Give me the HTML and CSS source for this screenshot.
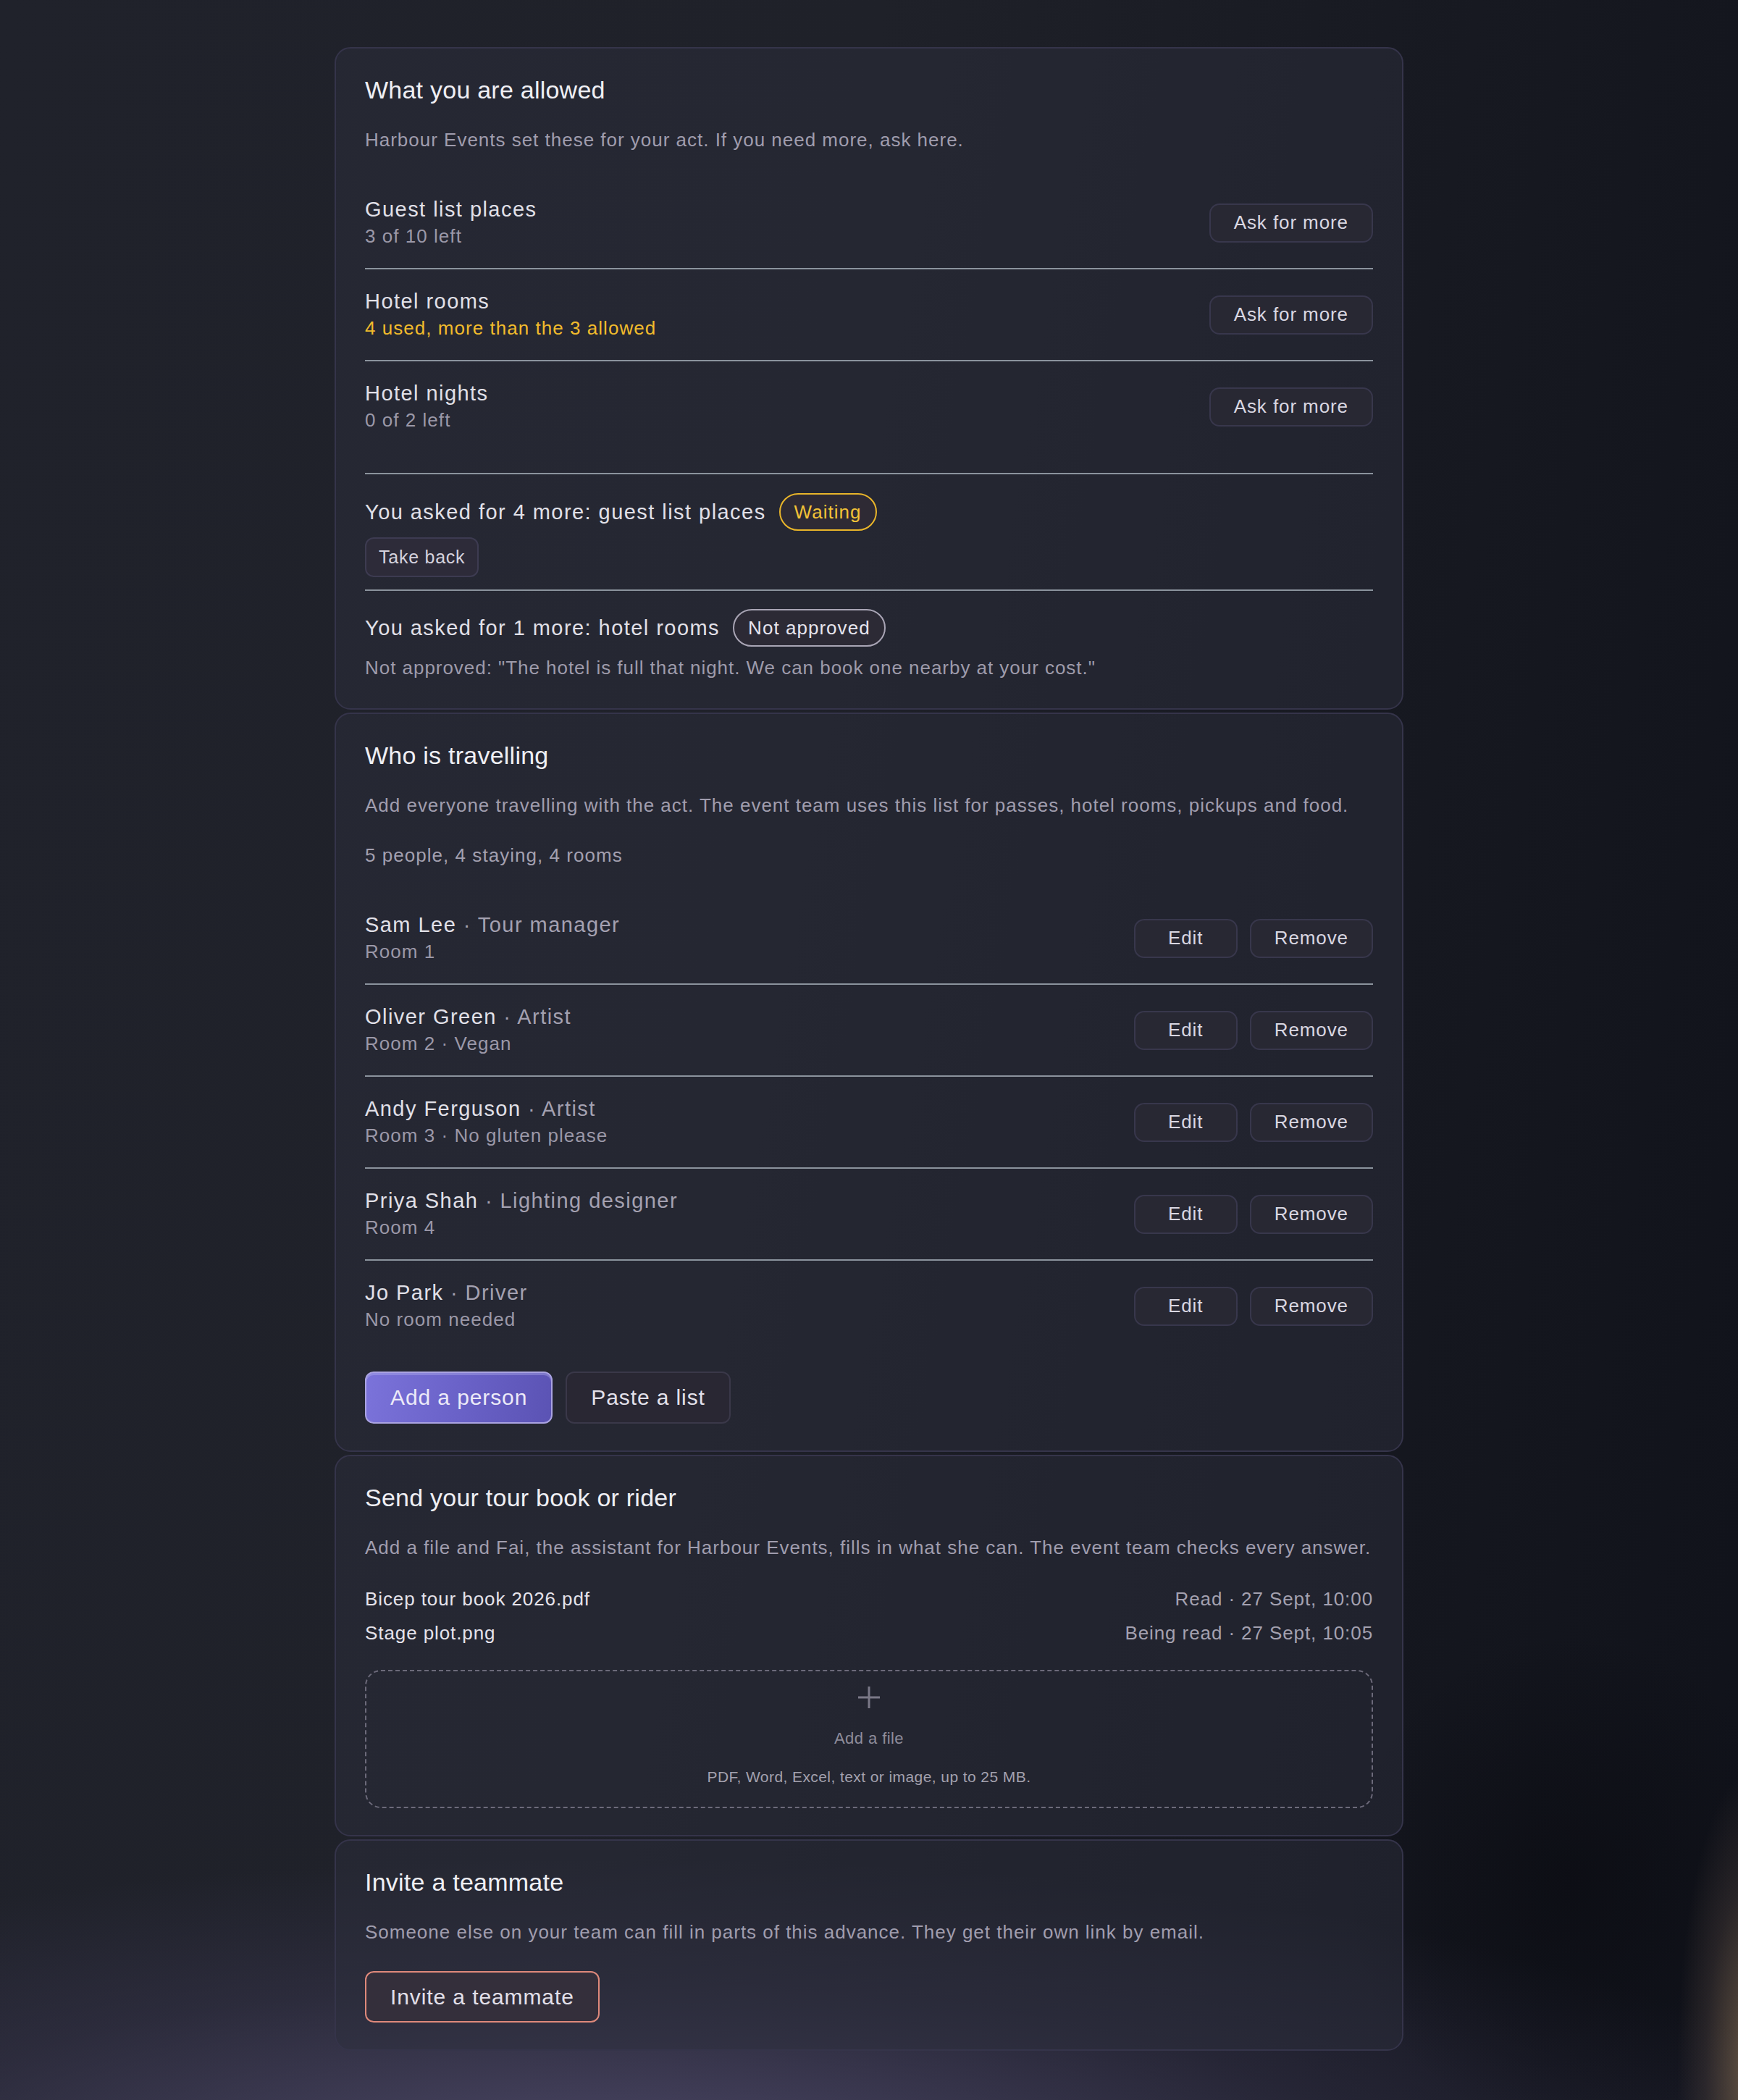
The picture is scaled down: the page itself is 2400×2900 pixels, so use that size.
FILE: index.html
```html
<!DOCTYPE html>
<html lang="en">
<head>
<meta charset="utf-8">
<title>Advance</title>
<link rel="stylesheet" href="styles.css">
</head>
<body>
<main class="page">
  <section class="card">
    <h2 class="card-title">What you are allowed</h2>
    <p class="card-desc">Harbour Events set these for your act. If you need more, ask here.</p>
    <ul class="list">
      <li class="row">
        <div class="row-text">
          <div class="row-name">Guest list places</div>
          <div class="row-sub">3 of 10 left</div>
        </div>
        <button class="btn">Ask for more</button>
      </li>
      <li class="row">
        <div class="row-text">
          <div class="row-name">Hotel rooms</div>
          <div class="row-sub row-sub-warn">4 used, more than the 3 allowed</div>
        </div>
        <button class="btn">Ask for more</button>
      </li>
      <li class="row">
        <div class="row-text">
          <div class="row-name">Hotel nights</div>
          <div class="row-sub">0 of 2 left</div>
        </div>
        <button class="btn">Ask for more</button>
      </li>
    </ul>
    <div class="requests">
      <div class="request">
        <div class="request-head">
          <span class="request-text">You asked for 4 more: guest list places</span>
          <span class="badge badge-waiting">Waiting</span>
        </div>
        <div class="request-actions">
          <button class="btn-small">Take back</button>
        </div>
      </div>
      <div class="request">
        <div class="request-head">
          <span class="request-text">You asked for 1 more: hotel rooms</span>
          <span class="badge badge-declined">Not approved</span>
        </div>
        <p class="request-note">Not approved: "The hotel is full that night. We can book one nearby at your cost."</p>
      </div>
    </div>
  </section>

  <section class="card">
    <h2 class="card-title">Who is travelling</h2>
    <p class="card-desc">Add everyone travelling with the act. The event team uses this list for passes, hotel rooms, pickups and food.</p>
    <p class="summary">5 people, 4 staying, 4 rooms</p>
    <ul class="list people">
      <li class="row">
        <div class="row-text">
          <div class="row-name">Sam Lee <span class="row-role">· Tour manager</span></div>
          <div class="row-sub">Room 1</div>
        </div>
        <div class="row-actions"><button class="btn btn-edit">Edit</button><button class="btn">Remove</button></div>
      </li>
      <li class="row">
        <div class="row-text">
          <div class="row-name">Oliver Green <span class="row-role">· Artist</span></div>
          <div class="row-sub">Room 2 · Vegan</div>
        </div>
        <div class="row-actions"><button class="btn btn-edit">Edit</button><button class="btn">Remove</button></div>
      </li>
      <li class="row">
        <div class="row-text">
          <div class="row-name">Andy Ferguson <span class="row-role">· Artist</span></div>
          <div class="row-sub">Room 3 · No gluten please</div>
        </div>
        <div class="row-actions"><button class="btn btn-edit">Edit</button><button class="btn">Remove</button></div>
      </li>
      <li class="row">
        <div class="row-text">
          <div class="row-name">Priya Shah <span class="row-role">· Lighting designer</span></div>
          <div class="row-sub">Room 4</div>
        </div>
        <div class="row-actions"><button class="btn btn-edit">Edit</button><button class="btn">Remove</button></div>
      </li>
      <li class="row">
        <div class="row-text">
          <div class="row-name">Jo Park <span class="row-role">· Driver</span></div>
          <div class="row-sub">No room needed</div>
        </div>
        <div class="row-actions"><button class="btn btn-edit">Edit</button><button class="btn">Remove</button></div>
      </li>
    </ul>
    <div class="actions">
      <button class="btn-big btn-primary">Add a person</button>
      <button class="btn-big btn-secondary">Paste a list</button>
    </div>
  </section>

  <section class="card">
    <h2 class="card-title">Send your tour book or rider</h2>
    <p class="card-desc">Add a file and Fai, the assistant for Harbour Events, fills in what she can. The event team checks every answer.</p>
    <ul class="files">
      <li class="file"><span class="file-name">Bicep tour book 2026.pdf</span><span class="file-status">Read · 27 Sept, 10:00</span></li>
      <li class="file"><span class="file-name">Stage plot.png</span><span class="file-status">Being read · 27 Sept, 10:05</span></li>
    </ul>
    <div class="dropzone">
      <svg class="drop-plus" width="32" height="32" viewBox="0 0 32 32" aria-hidden="true">
        <path d="M16 1v30M1 16h30" stroke="#7b7987" stroke-width="3" fill="none"/>
      </svg>
      <div class="drop-label">Add a file</div>
      <div class="drop-hint">PDF, Word, Excel, text or image, up to 25 MB.</div>
    </div>
  </section>

  <section class="card">
    <h2 class="card-title">Invite a teammate</h2>
    <p class="card-desc">Someone else on your team can fill in parts of this advance. They get their own link by email.</p>
    <div class="actions actions-invite">
      <button class="btn-big btn-invite">Invite a teammate</button>
    </div>
  </section>
</main>
</body>
</html>
```

FILE: styles.css
```css
* { box-sizing: border-box; }

html, body {
  margin: 0;
  padding: 0;
}

body {
  min-height: 2900px;
  font-family: "Liberation Sans", Arial, sans-serif;
  color: #e0dfe7;
  letter-spacing: 0.05em;
  background:
    radial-gradient(ellipse 130px 520px at 2420px 2860px, rgba(160, 130, 95, 0.6), rgba(110, 90, 80, 0.25) 50%, transparent 80%),
    radial-gradient(ellipse 420px 460px at 2170px 2600px, rgba(10, 11, 17, 0.65), transparent 75%),
    radial-gradient(ellipse 2300px 560px at 35% 103%, rgba(84, 78, 114, 0.85), rgba(62, 58, 86, 0.4) 45%, transparent 75%),
    linear-gradient(100deg, #20222b 0%, #1f2129 42%, #181a22 66%, #10121a 100%);
}

.page {
  width: 1476px;
  margin: 0 auto;
  padding: 65px 0 62px;
  display: flex;
  flex-direction: column;
  gap: 4px;
}

.card {
  border: 2px solid #35344a;
  border-radius: 22px;
  background: rgba(44, 46, 60, 0.5);
  padding: 38px 40px 37px;
}

.card-title {
  margin: 0;
  font-size: 34px;
  line-height: 38px;
  font-weight: 400;
  letter-spacing: 0.007em;
  color: #efeff4;
}

.card-desc {
  margin: 31px 0 0;
  font-size: 26px;
  line-height: 39px;
  letter-spacing: 0.038em;
  color: #a09dae;
}

.summary {
  margin: 30px 0 0;
  font-size: 26px;
  line-height: 39px;
  letter-spacing: 0.04em;
  color: #a3a0b0;
}

.list {
  list-style: none;
  margin: 32px 0 0;
  padding: 0;
}

.row {
  display: flex;
  align-items: center;
  justify-content: space-between;
  padding: 25px 0;
  border-bottom: 2px solid #8b939d;
}

.row:last-child {
  border-bottom: none;
}

.row-name {
  font-size: 29px;
  line-height: 38px;
  letter-spacing: 0.05em;
  color: #e1e0e8;
}

.row-role {
  color: #a4a1b1;
}

.row-sub {
  font-size: 26px;
  line-height: 37px;
  letter-spacing: 0.04em;
  color: #9b98a8;
}

.row-sub-warn {
  color: #f1bb2c;
}

.row-actions {
  display: flex;
  gap: 17px;
}

.btn {
  height: 54px;
  min-width: 143px;
  padding: 0 32px;
  border: 2px solid #38374c;
  border-radius: 14px;
  background: #282833;
  color: #d9d7e2;
  font-family: inherit;
  font-size: 26px;
  letter-spacing: 0.035em;
}

.requests {
  margin-top: 29px;
  border-top: 2px solid #8b939d;
}

.request {
  padding: 26px 0 17px;
}

.request + .request {
  border-top: 2px solid #8b939d;
  padding: 25px 0 0;
}

.request-head {
  display: flex;
  align-items: center;
  gap: 18px;
}

.request-text {
  font-size: 29px;
  line-height: 38px;
  letter-spacing: 0.05em;
  color: #e1e0e8;
}

.badge {
  height: 52px;
  display: inline-flex;
  align-items: center;
  padding: 0 19px;
  border-radius: 26px;
  font-size: 26px;
  letter-spacing: 0.04em;
  border: 2px solid;
}

.badge-waiting {
  border-color: #e9b52a;
  color: #f3c237;
  background: #2e2a34;
}

.badge-declined {
  border-color: #a9a5b5;
  color: #e7e5ee;
  background: #2c2a35;
}

.request-actions {
  margin-top: 9px;
  display: flex;
}

.btn-small {
  height: 55px;
  padding: 0 17px;
  border: 2px solid #3d3b51;
  border-radius: 12px;
  background: #2d2b39;
  color: #d4d2de;
  font-family: inherit;
  font-size: 25px;
  letter-spacing: 0.03em;
}

.request-note {
  margin: 10px 0 0;
  font-size: 26px;
  line-height: 38px;
  letter-spacing: 0.037em;
  color: #9e9bab;
}

.actions {
  display: flex;
  gap: 18px;
  margin-top: 28px;
}

.actions-invite {
  margin-top: 34px;
}

.btn-big {
  height: 72px;
  padding: 0 33px;
  border-radius: 12px;
  border: 2px solid;
  font-family: inherit;
  font-size: 30px;
  letter-spacing: 0.03em;
}

.btn-primary {
  border-color: #aaa3e2;
  background: linear-gradient(100deg, #7b73da 0%, #6a62c8 50%, #5b53b4 100%);
  color: #eceaf8;
  box-shadow: inset 0 3px 0 rgba(190, 185, 240, 0.35);
}

.btn-secondary {
  border-color: #3a3849;
  background: #292733;
  color: #e2e0ea;
}

.btn-invite {
  height: 71px;
  border-color: #df897b;
  background: #342f3b;
  color: #e3e0ea;
}

.files {
  list-style: none;
  margin: 28px 0 0;
  padding: 0;
}

.file {
  display: flex;
  justify-content: space-between;
  font-size: 26px;
  line-height: 47px;
  letter-spacing: 0.035em;
}

.file-name {
  color: #e5e3eb;
}

.file-status {
  color: #a4a1b0;
}

.dropzone {
  margin-top: 27px;
  height: 191px;
  border: 2px dashed #6c6a7a;
  border-radius: 22px;
  display: flex;
  flex-direction: column;
  align-items: center;
  padding-top: 20px;
}

.drop-plus {
  display: block;
}

.drop-label {
  margin-top: 24px;
  font-size: 22px;
  line-height: 34px;
  letter-spacing: 0.02em;
  color: #8e8c9a;
}

.drop-hint {
  margin-top: 21px;
  font-size: 21px;
  line-height: 30px;
  letter-spacing: 0.02em;
  color: #a3a1ae;
}
```
